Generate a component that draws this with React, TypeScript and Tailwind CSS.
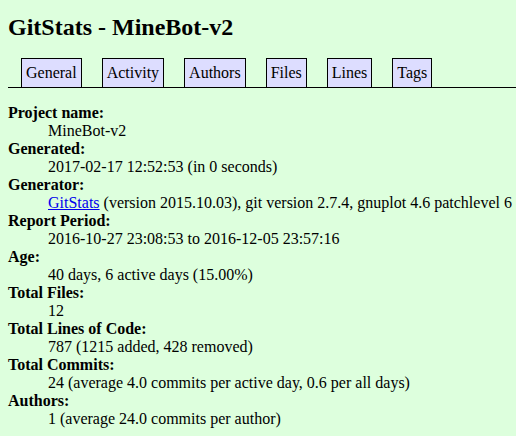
const tabs = ['General', 'Activity', 'Authors', 'Files', 'Lines', 'Tags']

const items: { label: string; value: React.ReactNode }[] = [
  { label: 'Project name', value: 'MineBot-v2' },
  { label: 'Generated', value: '2017-02-17 12:52:53 (in 0 seconds)' },
  {
    label: 'Generator',
    value: (
      <>
        <a href="#" className="text-[#0000ee] underline">GitStats</a> (version 2015.10.03), git version 2.7.4, gnuplot 4.6 patchlevel 6
      </>
    ),
  },
  { label: 'Report Period', value: '2016-10-27 23:08:53 to 2016-12-05 23:57:16' },
  { label: 'Age', value: '40 days, 6 active days (15.00%)' },
  { label: 'Total Files', value: '12' },
  { label: 'Total Lines of Code', value: '787 (1215 added, 428 removed)' },
  { label: 'Total Commits', value: '24 (average 4.0 commits per active day, 0.6 per all days)' },
  { label: 'Authors', value: '1 (average 24.0 commits per author)' },
]

export default function App() {
  return (
    <div className="min-h-screen bg-[#ddffdd] text-black p-2 text-[16px] font-['Liberation_Serif',serif] whitespace-nowrap">
      <h1 className="mt-[6px] text-[24px] font-bold leading-[27px]">GitStats - MineBot-v2</h1>

      <div className="mt-[17px] -mr-2 flex gap-[20px] pl-[13px] border-b border-black">
        {tabs.map(t => (
          <a
            key={t}
            href="#"
            className="h-[29px] flex items-center px-1 border border-b-0 border-black bg-[#ddddff] text-black"
          >
            {t}
          </a>
        ))}
      </div>

      <dl className="mt-4 leading-[18px]">
        {items.map(it => (
          <div key={it.label}>
            <dt className="font-bold">{it.label}:</dt>
            <dd className="ml-10">{it.value}</dd>
          </div>
        ))}
      </dl>
    </div>
  )
}
